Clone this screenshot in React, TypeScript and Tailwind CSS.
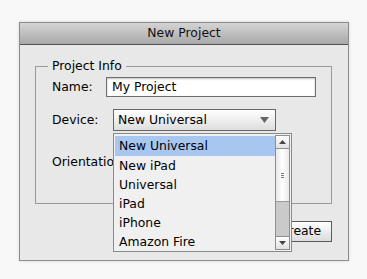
import React from "react";

const items = ["New Universal", "New iPad", "Universal", "iPad", "iPhone", "Amazon Fire"];

export default function App() {
  return (
    <div
      className="w-[367px] h-[279px] bg-[#f8f8f8] pt-[22px] pl-[19px] overflow-hidden text-[12.4px] text-black"
      style={{ fontFamily: '"DejaVu Sans", "Lucida Grande", sans-serif' }}
    >
      <div className="w-[330px] h-[239px] border border-[#8c8c8c] flex flex-col shadow-[0_0_3px_rgba(0,0,0,0.15)]">
        <div className="h-[22px] shrink-0 bg-gradient-to-b from-[#d4d4d4] to-[#a9a9a9] border-b border-[#505050] flex items-center justify-center text-[12.4px] text-[#111]">
          New Project
        </div>
        <div className="flex-1 bg-[#e8e8e8] relative pl-[15px] pt-[21px] flex flex-col">
          <div className="relative w-[297px] h-[138px] border border-[#999] pl-[16px] pt-[10px] flex flex-col">
            <div className="absolute -top-[9px] left-[12px] bg-[#e8e8e8] px-[4px] leading-[16px]">Project Info</div>
            <div className="flex items-center h-[20px]">
              <span className="w-[54px]">Name:</span>
              <div className="w-[210px] h-[20px] bg-white border border-[#6e6e6e] shadow-[inset_0_1px_2px_rgba(0,0,0,0.25)] flex items-center pl-[5px]">
                My Project
              </div>
            </div>
            <div className="flex items-center h-[22px] mt-[12px]">
              <span className="w-[61px]">Device:</span>
              <div className="w-[163px] h-[22px] bg-gradient-to-b from-white to-[#dedede] border border-[#666] flex items-center pl-[4px] pr-[6px] justify-between">
                <span>New Universal</span>
                <svg width="9" height="6" viewBox="0 0 9 6"><path d="M0 0 L9 0 L4.5 6 Z" fill="#666" /></svg>
              </div>
            </div>
            <div className="flex items-center h-[20px] mt-[21px]">
              <span>Orientation:</span>
            </div>
          </div>
          <div className="ml-[221px] mt-[17px] w-[76px] h-[21px] bg-gradient-to-b from-white to-[#dcdcdc] border border-[#5a5a5a] flex items-center justify-center pl-[13px]">
            Create
          </div>

          <div className="absolute left-[93px] top-[88px] w-[179px] h-[119px] bg-[#f0f0f0] border border-[#8a8a8a] flex p-[1px]">
            <div className="flex-1 flex flex-col pt-[1px]">
              {items.map((it, i) => (
                <div
                  key={it}
                  className={i === 0 ? "h-[20px] leading-[20px] pl-[4px] bg-[#a7c7f0]" : "h-[19px] leading-[19px] pl-[4px]"}
                >
                  {it}
                </div>
              ))}
            </div>
            <div className="w-[15px] border border-[#8f8f8f] flex flex-col bg-[#f4f4f4]">
              <div className="h-[13px] border-b border-[#8f8f8f] bg-gradient-to-b from-white to-[#e0e0e0] flex items-center justify-center">
                <svg width="7" height="4" viewBox="0 0 7 4"><path d="M0 4 L7 4 L3.5 0 Z" fill="#444" /></svg>
              </div>
              <div className="h-[53px] bg-gradient-to-r from-[#e8e8e8] via-white to-[#e8e8e8] border-b border-[#9a9a9a] flex items-center justify-center">
                <svg width="3" height="5" viewBox="0 0 3 5"><path d="M0 0.5 H3 M0 2.5 H3 M0 4.5 H3" stroke="#777" strokeWidth="1" /></svg>
              </div>
              <div className="flex-1 bg-[#cacaca]"></div>
              <div className="h-[13px] border-t border-[#8f8f8f] bg-gradient-to-b from-white to-[#e0e0e0] flex items-center justify-center">
                <svg width="7" height="4" viewBox="0 0 7 4"><path d="M0 0 L7 0 L3.5 4 Z" fill="#444" /></svg>
              </div>
            </div>
          </div>
        </div>
      </div>
    </div>
  );
}
